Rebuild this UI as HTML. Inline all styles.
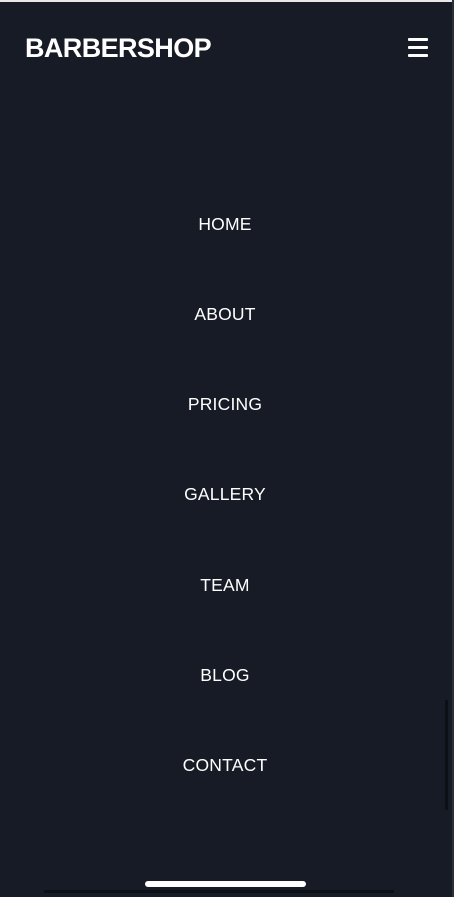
<!DOCTYPE html>
<html><head><style>
html,body{margin:0;padding:0}
body{width:454px;height:897px;background:#161b25;position:relative;overflow:hidden;font-family:"Liberation Sans",sans-serif;color:#fff}
.top{position:absolute;left:0;top:0;width:454px;height:2px;background:#e8e8e8}
.right{position:absolute;right:0;top:0;width:2px;height:897px;background:#2a2f38}
.logo{position:absolute;left:25px;top:32px;font-size:27px;font-weight:bold;letter-spacing:-0.6px;line-height:32px}
.hb{position:absolute;left:408px;top:38px;width:20px}
.hb i{display:block;height:3px;background:#fff;margin-bottom:5px;border-radius:1px}
.nav a{position:absolute;left:0;width:450px;text-align:center;font-size:17.5px;line-height:20px;color:#fff;text-decoration:none;letter-spacing:0.2px}
.bar{position:absolute;left:145px;top:881px;width:161px;height:6px;background:#fff;border-radius:3px}
.line{position:absolute;left:44px;top:890px;width:350px;height:3px;background:#0c0f14}
.sb{position:absolute;left:445px;top:700px;width:3px;height:110px;background:#0c0f14}
</style></head><body>
<div class="top"></div><div class="right"></div>
<div class="logo">BARBERSHOP</div>
<div class="hb"><i></i><i></i><i></i></div>
<div class="nav">
<a style="top:214px">HOME</a>
<a style="top:304px">ABOUT</a>
<a style="top:394px">PRICING</a>
<a style="top:484px">GALLERY</a>
<a style="top:575px">TEAM</a>
<a style="top:665px">BLOG</a>
<a style="top:755px">CONTACT</a>
</div>
<div class="sb"></div>
<div class="bar"></div><div class="line"></div>
</body></html>
